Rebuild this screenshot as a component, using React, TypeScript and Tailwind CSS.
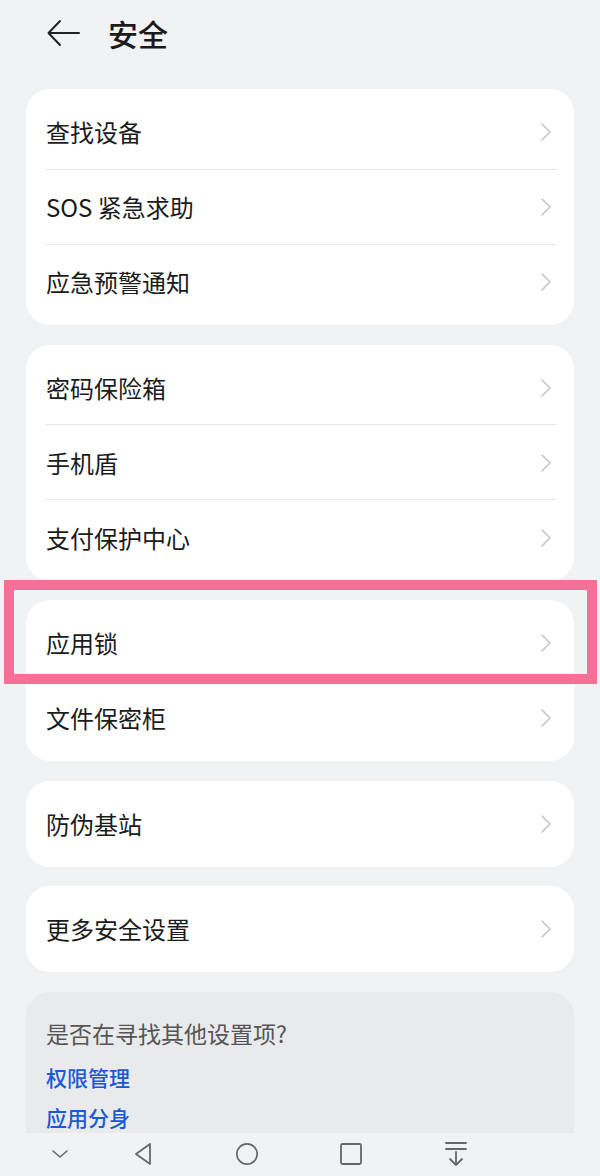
import React from "react";

const font = { fontFamily: '"Noto Sans CJK SC", "Noto Sans", sans-serif' };

function Chevron() {
  return (
    <svg width="12" height="20" viewBox="0 0 12 20" fill="none">
      <path d="M2 2 L10 10 L2 18" stroke="#c4c4c4" strokeWidth="1.6" strokeLinecap="round" strokeLinejoin="round" />
    </svg>
  );
}

function Row({ label, divider }: { label: string; divider?: boolean }) {
  return (
    <div className="relative flex h-[75px] items-center justify-between pl-[20px] pr-[22px]">
      <span className="text-[24px] leading-none text-[#1b1b1b]">{label}</span>
      <Chevron />
      {divider && <div className="absolute bottom-0 left-[20px] right-[18px] h-px bg-[#e5e5e7]" />}
    </div>
  );
}

function Card({ items }: { items: string[] }) {
  return (
    <div className="rounded-[24px] bg-white py-[5.5px]">
      {items.map((it, i) => (
        <Row key={it} label={it} divider={i < items.length - 1} />
      ))}
    </div>
  );
}

export default function App() {
  return (
    <div className="relative flex h-[1176px] w-[600px] flex-col overflow-hidden bg-[#f1f2f4]" style={font}>
      <div className="flex h-[66px] shrink-0 items-center pl-[46px]">
        <svg width="34" height="28" viewBox="0 0 34 28" fill="none">
          <path d="M33 14 H3 M14 2 L2.5 14 L14 26" stroke="#222" strokeWidth="2" strokeLinecap="round" strokeLinejoin="round" />
        </svg>
        <span className="ml-[28px] text-[30px] font-medium leading-none text-[#1b1b1b]">安全</span>
      </div>
      <div className="flex flex-1 flex-col gap-[19.5px] overflow-hidden px-[26px] pt-[23px]">
        <Card items={["查找设备", "SOS 紧急求助", "应急预警通知"]} />
        <Card items={["密码保险箱", "手机盾", "支付保护中心"]} />
        <Card items={["应用锁", "文件保密柜"]} />
        <Card items={["防伪基站"]} />
        <Card items={["更多安全设置"]} />
        <div className="shrink-0 rounded-t-[24px] bg-[#e9eaec] px-[20px] pt-[26px] pb-[40px]">
          <div className="text-[23px] leading-[30px] text-[#555]">是否在寻找其他设置项?</div>
          <div className="mt-[15px] text-[21px] font-medium leading-[28px] text-[#1b58d8]">权限管理</div>
          <div className="mt-[12px] text-[21px] font-medium leading-[28px] text-[#1b58d8]">应用分身</div>
        </div>
      </div>
      <div className="flex h-[43px] shrink-0 items-center bg-[#f1f2f4] pb-[2px]">
        <div className="ml-[48px] flex w-[24px] justify-center">
          <svg width="20" height="12" viewBox="0 0 20 12" fill="none">
            <path d="M3 3 L10 9 L17 3" stroke="#666" strokeWidth="1.6" strokeLinecap="round" strokeLinejoin="round" />
          </svg>
        </div>
        <div className="ml-[59px] flex w-[24px] justify-center">
          <svg width="20" height="24" viewBox="0 0 20 24" fill="none">
            <path d="M17 2 L3 12 L17 22 Z" stroke="#666" strokeWidth="1.8" strokeLinejoin="round" />
          </svg>
        </div>
        <div className="ml-[80px] flex w-[24px] justify-center">
          <svg width="26" height="26" viewBox="0 0 26 26" fill="none">
            <circle cx="13" cy="13" r="11" stroke="#666" strokeWidth="1.8" />
          </svg>
        </div>
        <div className="ml-[80px] flex w-[24px] justify-center">
          <svg width="24" height="24" viewBox="0 0 24 24" fill="none">
            <rect x="2" y="2" width="20" height="20" rx="1.5" stroke="#666" strokeWidth="1.8" />
          </svg>
        </div>
        <div className="ml-[81px] flex w-[24px] justify-center">
          <svg width="24" height="26" viewBox="0 0 24 26" fill="none">
            <path d="M2 2 H22 M2 8 H22 M12 11 V24 M6 18 L12 24 L18 18" stroke="#666" strokeWidth="1.8" strokeLinecap="round" strokeLinejoin="round" />
          </svg>
        </div>
      </div>
      <div className="pointer-events-none absolute left-[4px] top-[580px] h-[104px] w-[593px] border-[10px] border-[#f56f96]" />
    </div>
  );
}
